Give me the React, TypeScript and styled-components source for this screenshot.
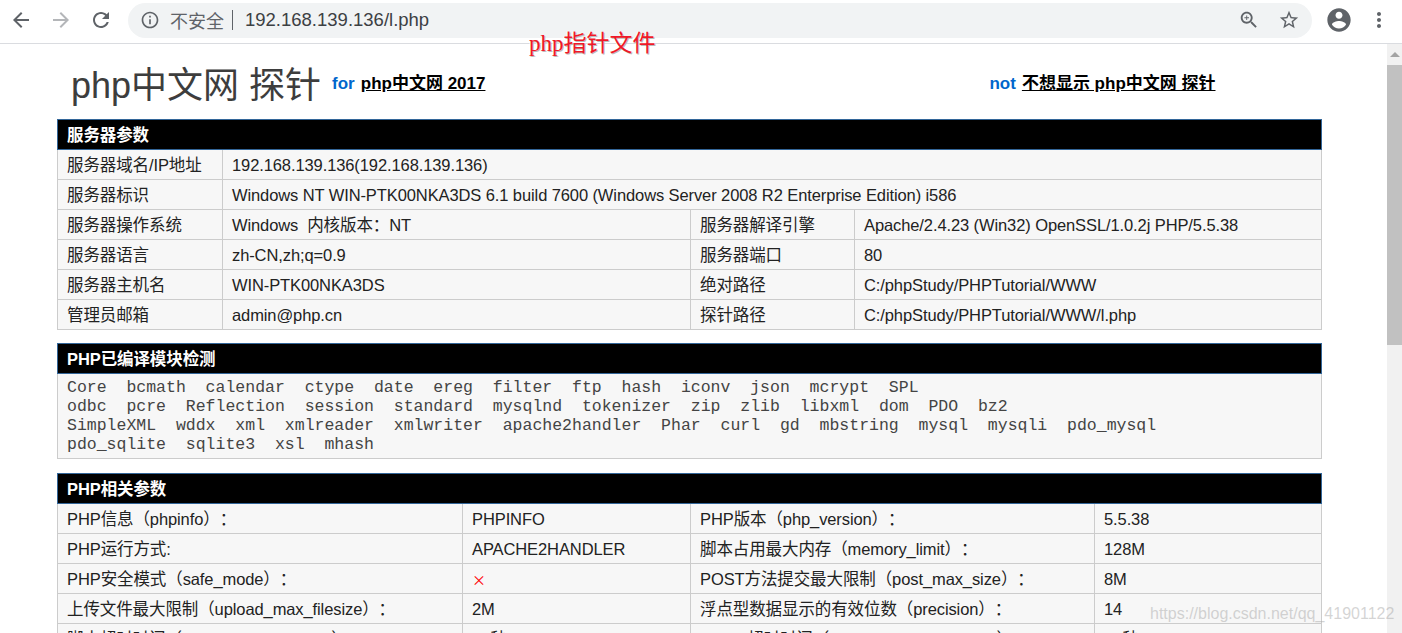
import React from 'react';
import styled, { createGlobalStyle } from 'styled-components';

const cjk = `"Noto Sans CJK SC", sans-serif`;
const bodyFont = `"Liberation Sans", ${cjk}`;

const GlobalStyle = createGlobalStyle`
  html, body {
    margin: 0;
    height: 100%;
    overflow: hidden;
    background: #fff;
  }
`;

const Frame = styled.div`
  position: relative;
  width: 1402px;
  height: 633px;
  overflow: hidden;
  display: flex;
  flex-direction: column;
  font-family: ${bodyFont};
  text-spacing-trim: space-all;
`;

const Toolbar = styled.div`
  height: 43px;
  flex: none;
  display: flex;
  align-items: center;
  background: #fff;
  border-bottom: 1px solid #dadce0;
  padding-left: 9px;
`;

const NavIcon = styled.svg<{ $dim?: boolean; $size?: number }>`
  width: ${(p) => p.$size ?? 24}px;
  height: ${(p) => p.$size ?? 24}px;
  flex: none;
  fill: ${(p) => (p.$dim ? '#b4b6b9' : '#5f6368')};
`;

const NavGroup = styled.div`
  display: flex;
  align-items: center;
  gap: 16px;
  margin-right: 15px;
  margin-top: -3px;
`;

const Omnibox = styled.div`
  width: 1184px;
  height: 35px;
  margin-top: -3px;
  border-radius: 18px;
  background: #f1f3f4;
  display: flex;
  align-items: center;
  padding: 0 12px 0 12px;
  box-sizing: border-box;
`;

const Insecure = styled.span`
  margin-left: 10px;
  font-size: 18px;
  color: #5f6368;
  font-family: ${cjk};
`;

const Divider = styled.span`
  width: 1px;
  height: 20px;
  background: #5f6368;
  margin: 0 12px 0 8px;
`;

const Url = styled.span`
  font-size: 18.5px;
  color: #3c4043;
  flex: 1;
`;

const BoxActions = styled.div`
  display: flex;
  align-items: center;
  gap: 18px;
`;

const ProfileGroup = styled.div`
  display: flex;
  align-items: center;
  gap: 14px;
  margin-left: 13px;
  margin-top: -4px;
`;

const Viewport = styled.div`
  flex: 1;
  display: flex;
  min-height: 0;
`;

const Page = styled.div`
  flex: 1;
  overflow: hidden;
  padding: 0 0 0 57px;
`;

const TitleRow = styled.div`
  width: 1265px;
  height: 75px;
  display: flex;
  align-items: center;
  box-sizing: border-box;
`;

const Title = styled.h1`
  margin: 0 11px 0 14px;
  font-size: 36px;
  font-weight: 400;
  color: #3d3d3d;
  white-space: nowrap;
`;

const Note = styled.span<{ $push?: boolean }>`
  font-size: 17px;
  font-weight: 700;
  color: #0066cc;
  white-space: nowrap;
  margin-left: ${(p) => (p.$push ? '504px' : 0)};
`;

const NoteLink = styled.a`
  color: #000;
  text-decoration: underline;
  margin-left: 6px;
`;

const Section = styled.table<{ $gap?: number; $width?: number }>`
  width: ${(p) => p.$width ?? 1264}px;
  border-collapse: collapse;
  table-layout: fixed;
  margin-bottom: ${(p) => p.$gap ?? 13}px;
  font-size: 16.5px;
  line-height: 20px;
  letter-spacing: -0.1px;
  color: #222;
`;

const HeadCell = styled.th`
  height: 30px;
  padding: 0 0 0 9px;
  box-sizing: border-box;
  background: #000;
  color: #fff;
  font-weight: 700;
  text-align: left;
  border: 1px solid #336699;
`;

const Cell = styled.td`
  height: 30px;
  padding: 0 0 0 9px;
  box-sizing: border-box;
  background: #f7f7f7;
  border: 1px solid #cccccc;
  white-space: nowrap;
  overflow: hidden;
`;

const ModuleCell = styled.td`
  padding: 4px 9px 4px;
  background: #f7f7f7;
  border: 1px solid #cccccc;
`;

const ModuleLine = styled.div`
  font-family: "Liberation Mono", monospace;
  font-size: 16.5px;
  letter-spacing: 0;
  line-height: 19px;
  height: 19px;
  color: #444;
  white-space: pre;
`;

const Cross = styled.span`
  color: #ff0000;
  font-family: ${cjk};
  font-size: 14px;
`;

const Scrollbar = styled.div`
  width: 15px;
  flex: none;
  background: #f1f1f1;
  display: flex;
  flex-direction: column;
  align-items: center;
`;

const ScrollArrow = styled.div`
  height: 21px;
  flex: none;
  display: flex;
  align-items: center;
  justify-content: center;
  &::before {
    content: '';
    border-left: 5px solid transparent;
    border-right: 5px solid transparent;
    border-bottom: 5px solid #a3a3a3;
  }
`;

const ScrollThumb = styled.div`
  width: 15px;
  height: 280px;
  background: #c1c1c1;
`;

const Caption = styled.div`
  position: absolute;
  left: 529px;
  top: 30px;
  font-family: "Liberation Serif", ${cjk};
  font-size: 23px;
  line-height: 28px;
  color: #f01828;
  text-shadow: 1px 1px 0 #bbb, -1px 0 0 #fff;
  white-space: nowrap;
`;

const Watermark = styled.div`
  position: absolute;
  left: 1150px;
  top: 604px;
  font-family: "Liberation Sans", sans-serif;
  font-size: 16px;
  line-height: 20px;
  color: rgba(170, 170, 170, 0.5);
  white-space: nowrap;
`;

type Row = [string, React.ReactNode, string?, React.ReactNode?];

const serverRows: Row[] = [
  ['服务器域名/IP地址', '192.168.139.136(192.168.139.136)'],
  ['服务器标识', 'Windows NT WIN-PTK00NKA3DS 6.1 build 7600 (Windows Server 2008 R2 Enterprise Edition) i586'],
  ['服务器操作系统', 'Windows \u00a0内核版本：NT', '服务器解译引擎', 'Apache/2.4.23 (Win32) OpenSSL/1.0.2j PHP/5.5.38'],
  ['服务器语言', 'zh-CN,zh;q=0.9', '服务器端口', '80'],
  ['服务器主机名', 'WIN-PTK00NKA3DS', '绝对路径', 'C:/phpStudy/PHPTutorial/WWW'],
  ['管理员邮箱', 'admin@php.cn', '探针路径', 'C:/phpStudy/PHPTutorial/WWW/l.php'],
];

const phpRows: Row[] = [
  ['PHP信息（phpinfo）：', 'PHPINFO', 'PHP版本（php_version）：', '5.5.38'],
  ['PHP运行方式:', 'APACHE2HANDLER', '脚本占用最大内存（memory_limit）：', '128M'],
  ['PHP安全模式（safe_mode）：', <Cross>×</Cross>, 'POST方法提交最大限制（post_max_size）：', '8M'],
  ['上传文件最大限制（upload_max_filesize）：', '2M', '浮点型数据显示的有效位数（precision）：', '14'],
  ['脚本超时时间（max_execution_time）：', '30秒', 'socket超时时间（default_socket_timeout）：', '60秒'],
];

const moduleLines = [
  ['Core', 'bcmath', 'calendar', 'ctype', 'date', 'ereg', 'filter', 'ftp', 'hash', 'iconv', 'json', 'mcrypt', 'SPL'],
  ['odbc', 'pcre', 'Reflection', 'session', 'standard', 'mysqlnd', 'tokenizer', 'zip', 'zlib', 'libxml', 'dom', 'PDO', 'bz2'],
  ['SimpleXML', 'wddx', 'xml', 'xmlreader', 'xmlwriter', 'apache2handler', 'Phar', 'curl', 'gd', 'mbstring', 'mysql', 'mysqli', 'pdo_mysql'],
  ['pdo_sqlite', 'sqlite3', 'xsl', 'mhash'],
];

const InfoRows = ({ rows }: { rows: Row[] }) => (
  <tbody>
    {rows.map((r) => (
      <tr key={r[0]}>
        <Cell>{r[0]}</Cell>
        {r[2] ? (
          <>
            <Cell>{r[1]}</Cell>
            <Cell>{r[2]}</Cell>
            <Cell>{r[3]}</Cell>
          </>
        ) : (
          <Cell colSpan={3}>{r[1]}</Cell>
        )}
      </tr>
    ))}
  </tbody>
);

const Cols = ({ widths }: { widths: number[] }) => (
  <colgroup>
    {widths.map((w, i) => (
      <col key={i} style={{ width: w }} />
    ))}
  </colgroup>
);

export default function App() {
  return (
    <Frame>
      <GlobalStyle />
      <Toolbar>
        <NavGroup>
          <NavIcon viewBox="0 0 24 24"><path d="M20 11H7.83l5.59-5.59L12 4l-8 8 8 8 1.41-1.41L7.83 13H20v-2z" /></NavIcon>
          <NavIcon viewBox="0 0 24 24" $dim><path d="M12 4l-1.41 1.41L16.17 11H4v2h12.17l-5.58 5.59L12 20l8-8z" /></NavIcon>
          <NavIcon viewBox="0 0 24 24"><path d="M17.65 6.35C16.2 4.9 14.21 4 12 4c-4.42 0-7.99 3.58-7.99 8s3.57 8 7.99 8c3.73 0 6.84-2.55 7.73-6h-2.08c-.82 2.33-3.04 4-5.65 4-3.31 0-6-2.69-6-6s2.69-6 6-6c1.66 0 3.14.69 4.22 1.78L13 11h7V4l-2.35 2.35z" /></NavIcon>
        </NavGroup>
        <Omnibox>
          <NavIcon viewBox="0 0 24 24" $size={20}><path d="M11 7h2v2h-2zm0 4h2v6h-2zm1-9C6.48 2 2 6.48 2 12s4.48 10 10 10 10-4.48 10-10S17.52 2 12 2zm0 18c-4.41 0-8-3.59-8-8s3.59-8 8-8 8 3.59 8 8-3.59 8-8 8z" /></NavIcon>
          <Insecure>不安全</Insecure>
          <Divider />
          <Url>192.168.139.136/l.php</Url>
          <BoxActions>
            <NavIcon viewBox="0 0 24 24" $size={22}><path d="M15.5 14h-.79l-.28-.27C15.41 12.59 16 11.11 16 9.5 16 5.91 13.09 3 9.5 3S3 5.91 3 9.5 5.91 16 9.5 16c1.61 0 3.09-.59 4.23-1.57l.27.28v.79l5 4.99L20.49 19l-4.99-5zm-6 0C7.01 14 5 11.99 5 9.5S7.01 5 9.5 5 14 7.01 14 9.5 11.99 14 9.5 14zm2.5-4h-2v2H9v-2H7V9h2V7h1v2h2v1z" /></NavIcon>
            <NavIcon viewBox="0 0 24 24" $size={22}><path d="M22 9.24l-7.19-.62L12 2 9.19 8.63 2 9.24l5.46 4.73L5.82 21 12 17.27 18.18 21l-1.63-7.03L22 9.24zM12 15.4l-3.76 2.27 1-4.28-3.32-2.88 4.38-.38L12 6.1l1.71 4.04 4.38.38-3.32 2.88 1 4.28L12 15.4z" /></NavIcon>
          </BoxActions>
        </Omnibox>
        <ProfileGroup>
          <NavIcon viewBox="0 0 24 24" $size={28}><path d="M12 2C6.48 2 2 6.48 2 12s4.48 10 10 10 10-4.48 10-10S17.52 2 12 2zm0 3c1.66 0 3 1.34 3 3s-1.34 3-3 3-3-1.34-3-3 1.34-3 3-3zm0 14.2c-2.5 0-4.71-1.28-6-3.22.03-1.99 4-3.08 6-3.08 1.99 0 5.97 1.09 6 3.08-1.29 1.94-3.5 3.22-6 3.22z" /></NavIcon>
          <NavIcon viewBox="0 0 24 24"><path d="M12 8c1.1 0 2-.9 2-2s-.9-2-2-2-2 .9-2 2 .9 2 2 2zm0 2c-1.1 0-2 .9-2 2s.9 2 2 2 2-.9 2-2-.9-2-2-2zm0 6c-1.1 0-2 .9-2 2s.9 2 2 2 2-.9 2-2-.9-2-2-2z" /></NavIcon>
        </ProfileGroup>
      </Toolbar>
      <Viewport>
        <Page>
          <TitleRow>
            <Title>php中文网 探针</Title>
            <Note>for<NoteLink>php中文网 2017</NoteLink></Note>
            <Note $push>not<NoteLink>不想显示 php中文网 探针</NoteLink></Note>
          </TitleRow>
          <Section>
            <Cols widths={[165, 468, 164, 467]} />
            <thead>
              <tr><HeadCell colSpan={4}>服务器参数</HeadCell></tr>
            </thead>
            <InfoRows rows={serverRows} />
          </Section>
          <Section $gap={14} $width={1265}>
            <thead>
              <tr><HeadCell>PHP已编译模块检测</HeadCell></tr>
            </thead>
            <tbody>
              <tr>
                <ModuleCell>
                  {moduleLines.map((line) => (
                    <ModuleLine key={line[0]}>{line.join('  ')}</ModuleLine>
                  ))}
                </ModuleCell>
              </tr>
            </tbody>
          </Section>
          <Section>
            <Cols widths={[405, 228, 404, 227]} />
            <thead>
              <tr><HeadCell colSpan={4}>PHP相关参数</HeadCell></tr>
            </thead>
            <InfoRows rows={phpRows} />
          </Section>
        </Page>
        <Scrollbar>
          <ScrollArrow />
          <ScrollThumb />
        </Scrollbar>
      </Viewport>
      <Caption>php指针文件</Caption>
      <Watermark>https://blog.csdn.net/qq_41901122</Watermark>
    </Frame>
  );
}
